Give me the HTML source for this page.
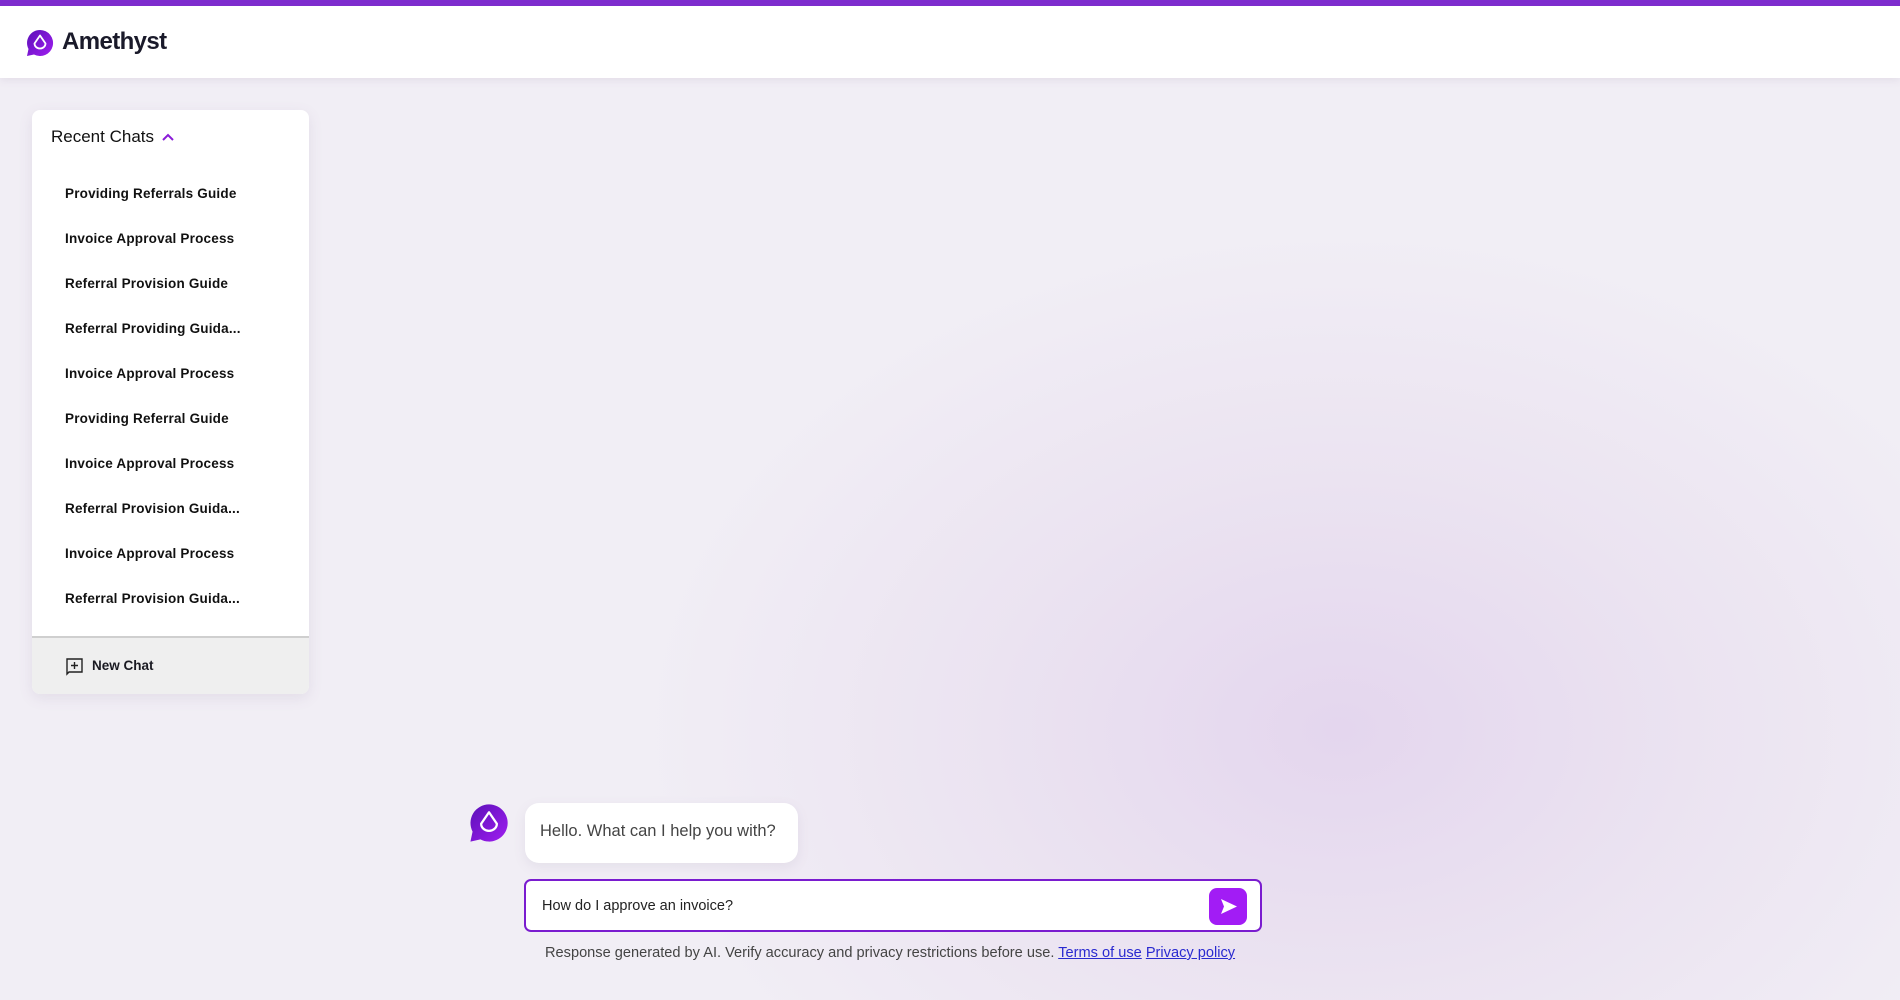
<!DOCTYPE html>
<html><head><meta charset="utf-8"><style>
*{box-sizing:border-box;margin:0;padding:0}
body{width:1900px;height:1000px;overflow:hidden;font-family:"Liberation Sans",sans-serif;background:radial-gradient(ellipse 700px 500px at 1340px 730px,#e4d6ee 0%,#ebe3f1 50%,#f1eef5 100%),#f1eef5;position:relative}
.top{position:absolute;left:0;top:0;width:1900px;height:6px;background:#7e2ccf}
.hdr{position:absolute;left:0;top:6px;width:1900px;height:72px;background:#fff;box-shadow:0 2px 8px rgba(120,100,140,.12)}
.logo{position:absolute;left:26px;top:23px}
.brand{position:absolute;left:62px;top:22px;font-size:24px;font-weight:bold;color:#1a1a2a;letter-spacing:-0.6px}
.side{position:absolute;left:32px;top:110px;width:277px;height:584px;background:#fff;border-radius:8px;box-shadow:0 4px 14px rgba(120,100,140,.12);overflow:hidden}
.rc{position:absolute;left:19px;top:17px;font-size:17px;color:#111}
.item{position:absolute;left:33px;font-size:13.5px;font-weight:bold;color:#111;letter-spacing:0.2px}
.foot{position:absolute;left:0;top:526px;width:277px;height:58px;background:#efefef;border-top:2px solid #cfcfcf}
.nc{position:absolute;left:60px;top:20px;font-size:13.5px;font-weight:bold;color:#1a1a22}
.av{position:absolute;left:469px;top:803px}
.bub{position:absolute;left:525px;top:803px;width:273px;height:60px;background:#fff;border-radius:14px;font-size:16.5px;color:#444;padding:19px 0 0 15px;box-shadow:0 4px 12px rgba(120,100,140,.1)}
.inp{position:absolute;left:524px;top:879px;width:738px;height:53px;background:#fff;border:2px solid #7a1ccf;border-radius:7px}
.inp span{position:absolute;left:16px;top:17px;font-size:14.5px;color:#222}
.send{position:absolute;left:683px;top:7px;width:38px;height:37px;background:#a21cf5;border-radius:8px}
.disc{position:absolute;left:545px;top:945px;font-size:14.6px;color:#444;white-space:nowrap}
.disc a{color:#2a2ad0;text-decoration:underline}
</style></head><body>
<div class="top"></div>
<div class="hdr">
<svg class="logo" width="28" height="28" viewBox="0 0 28 28"><defs><linearGradient id="g" x1="0" y1="0" x2="1" y2="1"><stop offset="0" stop-color="#5b10b8"/><stop offset="1" stop-color="#a01ef0"/></linearGradient></defs><path d="M14 1a13 13 0 1 1-6 24.5L1 27l1.5-7A13 13 0 0 1 14 1z" fill="url(#g)"/><path d="M14 6.5l-5.5 8a5.5 5 0 0 0 11 0z" fill="none" stroke="#fff" stroke-width="1.8" stroke-linejoin="round"/></svg>
<div class="brand">Amethyst</div>
</div>
<div class="side">
<div class="rc">Recent Chats <svg width="14" height="10" viewBox="0 0 14 10" style="margin-left:2px"><path d="M2 8l5-5 5 5" fill="none" stroke="#8a1cd8" stroke-width="2"/></svg></div>
<div class="item" style="top:76px">Providing Referrals Guide</div>
<div class="item" style="top:121px">Invoice Approval Process</div>
<div class="item" style="top:166px">Referral Provision Guide</div>
<div class="item" style="top:211px">Referral Providing Guida...</div>
<div class="item" style="top:256px">Invoice Approval Process</div>
<div class="item" style="top:301px">Providing Referral Guide</div>
<div class="item" style="top:346px">Invoice Approval Process</div>
<div class="item" style="top:391px">Referral Provision Guida...</div>
<div class="item" style="top:436px">Invoice Approval Process</div>
<div class="item" style="top:481px">Referral Provision Guida...</div>
<div class="foot">
<svg style="position:absolute;left:33px;top:19px" width="19" height="19" viewBox="0 0 19 19"><path d="M2 2h15v13H4l-2 2z" fill="none" stroke="#222" stroke-width="1.4"/><path d="M9.5 5v7M6 8.5h7" stroke="#222" stroke-width="1.4"/></svg>
<div class="nc">New Chat</div>
</div>
</div>
<svg class="av" width="40" height="40" viewBox="0 0 28 28"><defs><linearGradient id="g2" x1="0" y1="0" x2="1" y2="1"><stop offset="0" stop-color="#5b10b8"/><stop offset="1" stop-color="#a01ef0"/></linearGradient></defs><path d="M14 1a13 13 0 1 1-6 24.5L1 27l1.5-7A13 13 0 0 1 14 1z" fill="url(#g2)"/><path d="M14 6.5l-5.5 8a5.5 5 0 0 0 11 0z" fill="none" stroke="#fff" stroke-width="1.6" stroke-linejoin="round"/></svg>
<div class="bub">Hello. What can I help you with?</div>
<div class="inp"><span>How do I approve an invoice?</span>
<div class="send"><svg width="38" height="37" viewBox="0 0 38 37"><path d="M12 11l16 7.5-16 7.5 3-7.5z" fill="#fff"/></svg></div></div>
<div class="disc">Response generated by AI. Verify accuracy and privacy restrictions before use. <a>Terms of use</a> <a>Privacy policy</a></div>
</body></html>
